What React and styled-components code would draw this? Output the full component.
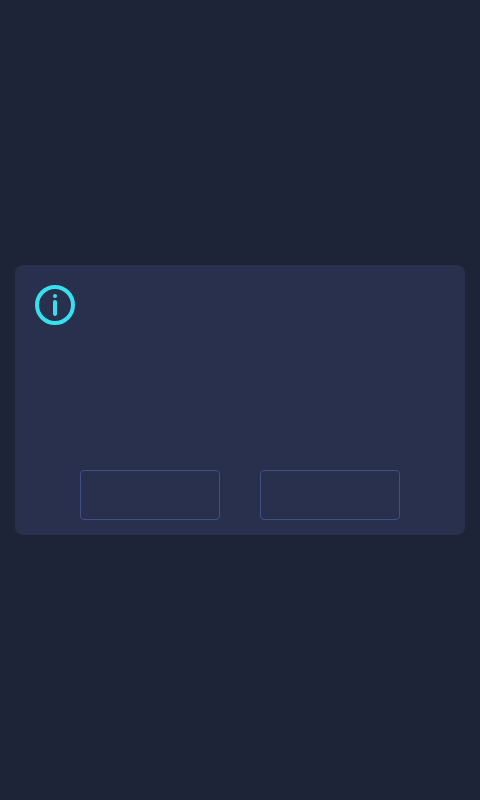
import React from "react";
import styled, { createGlobalStyle } from "styled-components";

const GlobalStyle = createGlobalStyle`
  body {
    margin: 0;
    background: #1e2438;
    font-family: "Liberation Sans", Arial, sans-serif;
  }
`;

const Screen = styled.main`
  display: grid;
  place-items: center;
  width: 480px;
  height: 800px;
  background: #1e2438;
`;

const Dialog = styled.section`
  box-sizing: border-box;
  display: flex;
  flex-direction: column;
  justify-content: space-between;
  width: 450px;
  height: 270px;
  padding: 20px 20px 15px;
  border-radius: 8px;
  background: #29304d;
`;

const InfoIcon = styled.svg`
  display: block;
  width: 40px;
  height: 40px;
  color: #36e0ee;
`;

const Actions = styled.footer`
  display: flex;
  justify-content: center;
  gap: 40px;
`;

const ActionButton = styled.button`
  box-sizing: border-box;
  width: 140px;
  height: 50px;
  padding: 0;
  border: 1px solid #404f87;
  border-radius: 4px;
  background: transparent;
`;

export default function App() {
  return (
    <>
      <GlobalStyle />
      <Screen>
        <Dialog role="dialog">
          <InfoIcon viewBox="0 0 40 40" aria-hidden="true">
            <circle cx="20" cy="20" r="18" fill="none" stroke="currentColor" strokeWidth="4" />
            <circle cx="20" cy="11" r="2" fill="currentColor" />
            <rect x="18" y="15" width="4" height="16" rx="2" fill="currentColor" />
          </InfoIcon>
          <Actions>
            <ActionButton type="button" />
            <ActionButton type="button" />
          </Actions>
        </Dialog>
      </Screen>
    </>
  );
}
